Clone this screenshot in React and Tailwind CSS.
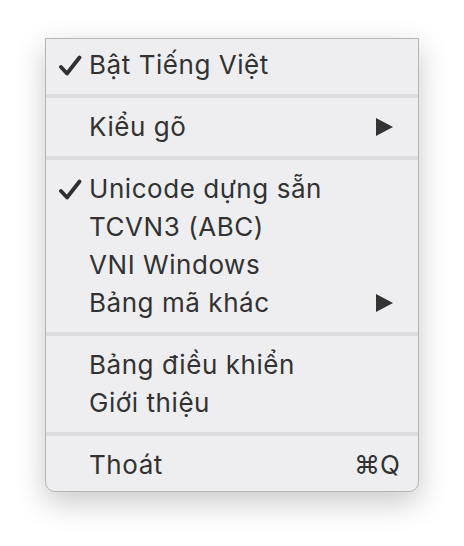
import React from "react";

function Check() {
  return (
    <svg width="24" height="22" viewBox="0 0 24 22" className="absolute left-[12px] top-[9px]">
      <path d="M3 12 L9 18.5 L21.5 2.5" fill="none" stroke="#2f2f2f" strokeWidth="3.8" strokeLinecap="round" strokeLinejoin="round" />
    </svg>
  );
}

function Arrow() {
  return (
    <svg width="17" height="18" viewBox="0 0 17 18" className="ml-auto mr-[25px]">
      <polygon points="0,0 17,9 0,18" fill="#333333" />
    </svg>
  );
}

function Item({ label, checked, arrow, shortcut }) {
  return (
    <div className="relative flex items-center h-[38px] pl-[43px] text-[26px] leading-[38px] tracking-[0.55px] text-[#323232]">
      {checked && <Check />}
      <span>{label}</span>
      {arrow && <Arrow />}
      {shortcut && <span className="ml-auto mr-[18px] tracking-normal">{shortcut}</span>}
    </div>
  );
}

function Sep() {
  return <div className="h-[4px] bg-[#dcdcdf]" />;
}

export default function App() {
  return (
    <div className="w-[464px] h-[546px] bg-white pt-[38px] pl-[45px]" style={{ fontFamily: "Inter, 'Noto Sans', sans-serif" }}>
      <div className="w-[374px] bg-[#eeeef0] border border-[#b5b5b7] rounded-b-[10px] shadow-[0_10px_30px_rgba(0,0,0,0.22)]">
        <div className="pt-[7px] pb-[10px]">
          <Item label="Bật Tiếng Việt" checked />
        </div>
        <Sep />
        <div className="py-[10px]">
          <Item label="Kiểu gõ" arrow />
        </div>
        <Sep />
        <div className="py-[10px]">
          <Item label="Unicode dựng sẵn" checked />
          <Item label="TCVN3 (ABC)" />
          <Item label="VNI Windows" />
          <Item label="Bảng mã khác" arrow />
        </div>
        <Sep />
        <div className="py-[10px]">
          <Item label="Bảng điều khiển" />
          <Item label="Giới thiệu" />
        </div>
        <Sep />
        <div className="pt-[10px] pb-[7px]">
          <Item label="Thoát" shortcut="⌘Q" />
        </div>
      </div>
    </div>
  );
}
